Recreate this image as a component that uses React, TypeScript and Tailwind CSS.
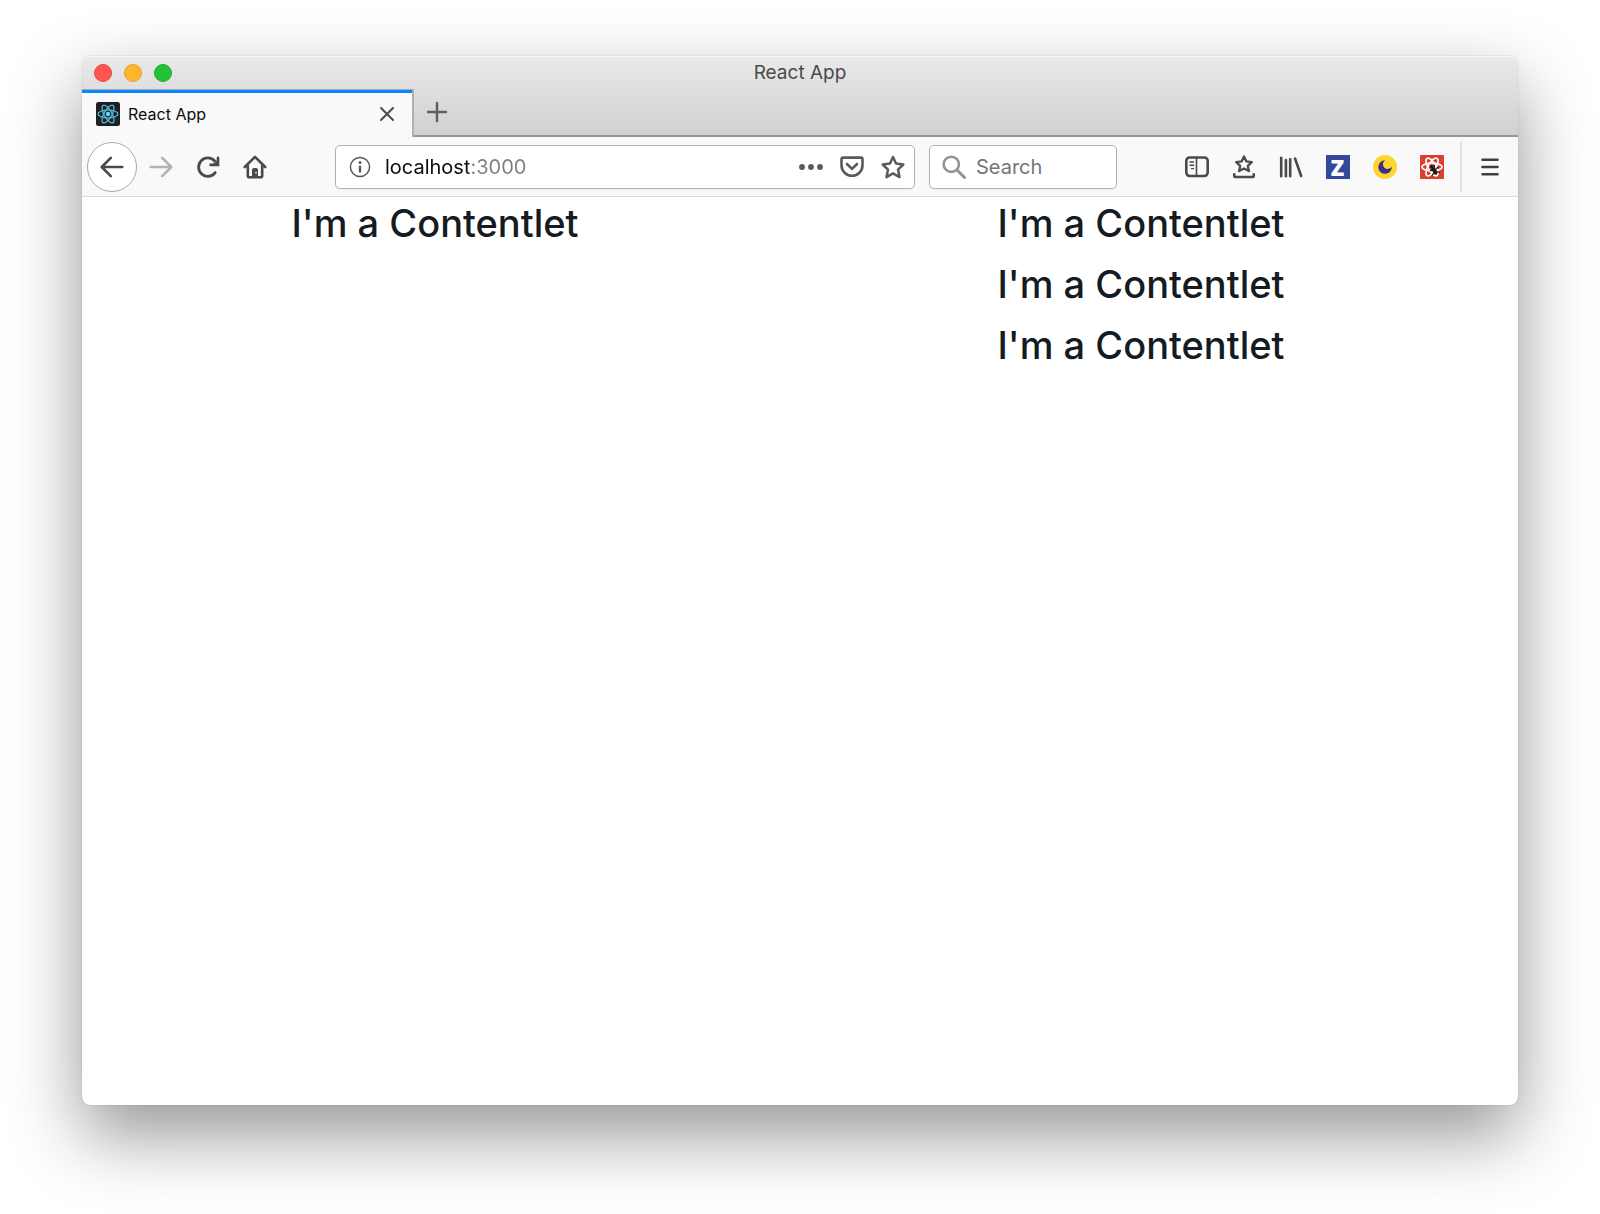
import type { ReactNode } from 'react';

const contentlets = [
    ["I'm a Contentlet"],
    ["I'm a Contentlet", "I'm a Contentlet", "I'm a Contentlet"],
];

function Icon({ children, className = 'size-6' }: { children: ReactNode; className?: string }) {
    return (
        <svg
            viewBox="0 0 24 24"
            fill="none"
            stroke="currentColor"
            strokeWidth="2.6"
            strokeLinecap="round"
            strokeLinejoin="round"
            aria-hidden="true"
            className={`${className} shrink-0`}
        >
            {children}
        </svg>
    );
}

function ToolButton({ label, children, disabled = false }: { label: string; children: ReactNode; disabled?: boolean }) {
    return (
        <button
            type="button"
            aria-label={label}
            disabled={disabled}
            className="flex h-12 w-[47px] shrink-0 items-center justify-center text-[#4a4a4c] disabled:text-[#b3b3b3]"
        >
            {children}
        </button>
    );
}

function Atom({ color, width }: { color: string; width: number }) {
    return (
        <g fill="none" stroke={color} strokeWidth={width}>
            <ellipse cx="12" cy="12" rx="10" ry="3.9" />
            <ellipse cx="12" cy="12" rx="10" ry="3.9" transform="rotate(60 12 12)" />
            <ellipse cx="12" cy="12" rx="10" ry="3.9" transform="rotate(120 12 12)" />
        </g>
    );
}

function TitleBar() {
    return (
        <div className="grid h-[33px] grid-cols-3 items-center">
            <div className="flex gap-3 pl-3">
                <button type="button" aria-label="Close window" className="size-[18px] rounded-full border border-[#e8463f] bg-[#ff5550]" />
                <button type="button" aria-label="Minimize window" className="size-[18px] rounded-full border border-[#e6a120] bg-[#ffb52b]" />
                <button type="button" aria-label="Zoom window" className="size-[18px] rounded-full border border-[#1daf2c] bg-[#24c138]" />
            </div>
            <span className="text-center text-[19px] leading-[25px] text-[#4a4a4a]">React App</span>
        </div>
    );
}

function TabBar() {
    return (
        <div className="flex h-12">
            <div className="flex w-[332px] items-center border-t border-r-2 border-t-[#a9a9b0] border-r-[#b0b0b0] bg-[#f9f9fa]">
                <div className="flex h-full w-full items-center border-t-3 border-[#0a84ff] pr-[17px] pb-[2px] pl-[14px]">
                    <svg viewBox="0 0 24 24" className="size-6 shrink-0" aria-hidden="true">
                        <rect width="24" height="24" rx="2.5" fill="#1e1f21" />
                        <Atom color="#53b9d6" width={1.3} />
                        <circle cx="12" cy="12" r="2.2" fill="#61dafb" />
                    </svg>
                    <span className="ml-2 flex-1 text-[16px] leading-6 text-[#0c0c0d]">React App</span>
                    <button type="button" aria-label="Close tab" className="text-[#4a4a4c]">
                        <Icon className="size-4">
                            <path d="M3 3l18 18M21 3L3 21" strokeWidth="3" />
                        </Icon>
                    </button>
                </div>
            </div>
            <div className="flex flex-1 items-center border-b-2 border-[#979797] pl-[11px]">
                <button type="button" aria-label="New tab" className="text-[#5d5d5d]">
                    <Icon>
                        <path d="M12 3v18M3 12h18" strokeWidth="2.4" />
                    </Icon>
                </button>
            </div>
        </div>
    );
}

function AddressBar() {
    return (
        <div className="ml-[57px] flex h-11 min-w-0 flex-1 items-center rounded-[5px] border border-[#b1b1b3] bg-white pr-[9px] pl-3 text-[#5a5a5c] shadow-xs">
            <button type="button" aria-label="Site information">
                <svg viewBox="0 0 24 24" className="size-6" fill="none" aria-hidden="true">
                    <circle cx="12" cy="12" r="9.6" stroke="currentColor" strokeWidth="1.5" />
                    <circle cx="12" cy="7.6" r="1.5" fill="currentColor" />
                    <path d="M12 11.6v5" stroke="currentColor" strokeWidth="2.4" strokeLinecap="round" />
                </svg>
            </button>
            {/* host in black, port in grey */}
            <input
                type="text"
                aria-label="Address"
                defaultValue="localhost:3000"
                className="ml-[13px] h-8 min-w-0 flex-1 bg-[linear-gradient(90deg,#0c0c0d_84px,#808080_84px)] bg-clip-text text-[20px] text-transparent caret-black outline-none"
            />
            <div className="flex gap-[17px]">
                <button type="button" aria-label="Page actions">
                    <svg viewBox="0 0 24 24" className="size-6" fill="currentColor" aria-hidden="true">
                        <circle cx="3" cy="12" r="2.9" />
                        <circle cx="12" cy="12" r="2.9" />
                        <circle cx="21" cy="12" r="2.9" />
                    </svg>
                </button>
                <button type="button" aria-label="Save to Pocket">
                    <Icon>
                        <path d="M3 2.6h18a1.5 1.5 0 0 1 1.5 1.5v6.2a10.5 10.5 0 0 1-21 0V4.1A1.5 1.5 0 0 1 3 2.6z" />
                        <path d="M7 9l5 4.9L17 9" />
                    </Icon>
                </button>
                <button type="button" aria-label="Bookmark this page">
                    <Icon>
                        <path d="M12 2l3 6.6 7.3.9-5.3 5.1 1.5 7.5-6.500-3.700-6.500 3.700L7 14.600 1.700 9.500 9 8.600z" strokeWidth="2.5" />
                    </Icon>
                </button>
            </div>
        </div>
    );
}

function SearchBox() {
    return (
        <label className="ml-[14px] flex h-11 w-[188px] shrink-0 items-center rounded-[5px] border border-[#b1b1b3] bg-white pl-3 text-[#939393] shadow-xs">
            <Icon>
                <circle cx="9.3" cy="9.3" r="7.6" />
                <path d="M15 15l7.5 7.5" strokeWidth="3" />
            </Icon>
            <input
                type="search"
                aria-label="Search"
                placeholder="Search"
                className="ml-[10px] min-w-0 flex-1 text-[20px] text-[#0c0c0d] outline-none placeholder:text-[#757575]"
            />
        </label>
    );
}

function Extensions() {
    return (
        <div className="ml-14 flex">
            <ToolButton label="Sidebars">
                <Icon>
                    <rect x="1.3" y="2.5" width="21.4" height="18.5" rx="3.4" />
                    <path d="M11.5 3v18" strokeWidth="1.6" />
                    <path d="M5 7h3.5M5 10.3h3.5M6.500 13.6h2" strokeWidth="1.4" />
                </Icon>
            </ToolButton>
            <ToolButton label="Bookmarks menu">
                <Icon>
                    <path d="M12 1.5l2.400 4.900 5.400.7-4 3.700 1.100 5.300L12 13.500l-4.900 2.600 1.100-5.300-4-3.700 5.400-.7z" strokeWidth="2.3" />
                    <path d="M2.200 19.200v1.200a1.600 1.600 0 0 0 1.600 1.600h16.400a1.600 1.600 0 0 0 1.600-1.600v-1.200" strokeWidth="2.6" />
                </Icon>
            </ToolButton>
            <ToolButton label="Library">
                <Icon>
                    <path d="M2.2 2.800v18.400M11.2 4.300v16.900M16 3.500l6.200 17.500" />
                    <path d="M6.900 5v16.200" />
                </Icon>
            </ToolButton>
            <ToolButton label="Zotero">
                <span className="flex size-6 items-center justify-center bg-[#35479b] font-['Open_Sans',sans-serif] text-[22px] leading-6 font-extrabold text-white">Z</span>
            </ToolButton>
            <ToolButton label="Dark mode">
                <svg viewBox="0 0 24 24" className="size-6" aria-hidden="true">
                    <circle cx="12" cy="12" r="12" fill="#fdd52f" />
                    <path d="M12.200 5.200a4.700 4.700 0 1 0 6.600 6.200A6.800 6.800 0 1 1 12.200 5.200z" fill="#432c85" />
                </svg>
            </ToolButton>
            <ToolButton label="React Developer Tools">
                <svg viewBox="0 0 24 24" className="size-6" aria-hidden="true">
                    <rect width="24" height="24" rx="1" fill="#d8412f" />
                    <Atom color="#fff" width={1.6} />
                    <g stroke="#181818" fill="#181818">
                        <ellipse cx="14.6" cy="15.8" rx="2" ry="3.8" transform="rotate(-35 14.6 15.8)" stroke="none" />
                        <circle cx="11.600" cy="11.700" r="1.700" stroke="none" />
                        <path d="M10 15.500l3-.500M12 20.500l2-3M18.500 12l-2.800 2M20 17.500l-3.500-1M14.500 10l-.5 3" fill="none" strokeWidth="1.3" />
                    </g>
                </svg>
            </ToolButton>
        </div>
    );
}

function Toolbar() {
    return (
        <div className="flex h-[60px] items-center border-b border-[#d9d9d9] bg-[#f9f9fa]">
            <button
                type="button"
                aria-label="Back"
                className="ml-[5px] flex size-[50px] shrink-0 items-center justify-center rounded-full border border-[#a8a8a8] bg-white text-[#4a4a4c]"
            >
                <Icon>
                    <path d="M22.3 12H2M10.8 2.800L1.700 12l9.100 9.200" />
                </Icon>
            </button>
            <ToolButton label="Forward" disabled>
                <Icon>
                    <path d="M1.700 12H22M13.200 2.800l9.100 9.200-9.100 9.200" />
                </Icon>
            </ToolButton>
            <ToolButton label="Reload">
                <Icon>
                    <path d="M19.200 17.600A9.200 9.200 0 1 1 18.700 6" strokeWidth="2.8" />
                    <path d="M22 2.700v7.200h-7.400" strokeLinejoin="miter" />
                    <path d="M22 5v4.900h-5z" fill="currentColor" strokeWidth="1" />
                </Icon>
            </ToolButton>
            <ToolButton label="Home">
                <Icon>
                    <path d="M1.800 12L12 1.900 22.200 12M4.800 11v9.700a1.600 1.600 0 0 0 1.600 1.600h11.200a1.600 1.600 0 0 0 1.600-1.600V11" />
                    <path d="M9.500 22v-7.500a1 1 0 0 1 1-1h3a1 1 0 0 1 1 1V22z" fill="currentColor" strokeWidth="1" />
                    <circle cx="13" cy="17.600" r="0.900" fill="#f9f9fa" stroke="none" />
                </Icon>
            </ToolButton>
            <AddressBar />
            <SearchBox />
            <Extensions />
            <div className="ml-[5px] flex h-[50px] w-[58px] shrink-0 items-center justify-center border-l-2 border-[#e1e1e2]">
                <button type="button" aria-label="Open menu" className="text-[#3f3f41]">
                    <Icon>
                        <path d="M4.500 4.800h15M4.500 12h15M4.500 19.200h15" />
                    </Icon>
                </button>
            </div>
        </div>
    );
}

export default function App() {
    return (
        <div className="flex min-h-screen bg-white px-[82px] pt-14 pb-[109px] font-['Inter',sans-serif]">
            <div className="flex flex-1 flex-col overflow-hidden rounded-lg bg-white shadow-[0_30px_72px_rgba(0,0,0,0.42),0_0_1px_rgba(0,0,0,0.4)]">
                <header>
                    <div className="rounded-t-lg bg-linear-to-b from-[#e9e9e9] to-[#d0d0d0] shadow-[inset_0_1px_0_#f6f6f6]">
                        <TitleBar />
                        <TabBar />
                    </div>
                    <Toolbar />
                </header>
                <main className="grid flex-1 grid-cols-2 content-start pr-6">
                    {contentlets.map((column, i) => (
                        <div key={i} className="flex flex-col gap-2 text-center">
                            {column.map((title, j) => (
                                <h1 key={j} className="text-[38px] leading-[53px] font-medium text-[#151b20]">
                                    {title}
                                </h1>
                            ))}
                        </div>
                    ))}
                </main>
            </div>
        </div>
    );
}
